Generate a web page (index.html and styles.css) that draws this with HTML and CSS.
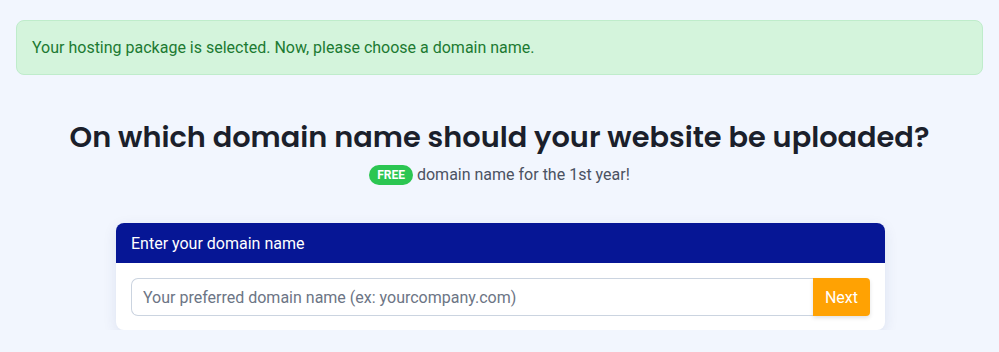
FILE: index.html
```html
<!DOCTYPE html>
<html lang="en">
<head>
<meta charset="utf-8">
<title>Choose domain</title>
<link rel="stylesheet" href="styles.css">
</head>
<body>
<div class="page">
  <div class="alert">Your hosting package is selected. Now, please choose a domain name.</div>
  <h1 class="title">On which domain name should your website be uploaded?</h1>
  <p class="subtitle"><span class="badge">FREE</span> domain name for the 1st year!</p>
  <div class="card">
    <div class="card-header">Enter your domain name</div>
    <div class="card-body">
      <form class="input-group">
        <input class="domain-input" type="text" placeholder="Your preferred domain name (ex: yourcompany.com)">
        <button class="next-btn" type="button">Next</button>
      </form>
    </div>
  </div>
</div>
</body>
</html>
```
FILE: styles.css
```css
* { box-sizing: border-box; }
html, body { margin: 0; padding: 0; }
body {
  background: #f2f6fe;
  font-family: Roboto, "Liberation Sans", Arial, sans-serif;
  color: #1f2430;
}
.page {
  padding: 20px 16px 0;
}
.alert {
  background: #d4f4dc;
  border: 1px solid #bfeccb;
  border-radius: 8px;
  color: #1c7a32;
  font-size: 16px;
  height: 55px;
  padding: 0 15px;
  display: flex;
  align-items: center;
}
.title {
  font-family: Poppins, "Open Sans", "DejaVu Sans", sans-serif;
  font-weight: 600;
  font-size: 28.8px;
  line-height: 40px;
  text-align: center;
  color: #1b1f2b;
  margin: 42px 0 0;
}
.subtitle {
  margin: 6px 0 0;
  text-align: center;
  font-size: 16px;
  line-height: 24px;
  color: #4b5262;
}
.badge {
  display: inline-block;
  background: #2cc652;
  color: #fff;
  font-weight: 700;
  font-size: 12px;
  line-height: 20px;
  height: 20px;
  padding: 0 8px;
  border-radius: 10px;
  vertical-align: 1px;
}
.card {
  width: 769px;
  margin: 36px auto 0;
  background: #fff;
  border-radius: 8px;
  box-shadow: 0 4px 14px rgba(40, 60, 120, 0.10);
  overflow: hidden;
  position: relative;
  left: 1px;
}
.card-header {
  background: #061695;
  color: #fff;
  font-size: 16px;
  height: 40px;
  padding: 0 15px;
  display: flex;
  align-items: center;
}
.card-body {
  padding: 15px 15px 14px;
}
.input-group {
  display: flex;
  margin: 0;
}
.domain-input {
  flex: 1;
  height: 38px;
  border: 1px solid #cbd4e0;
  border-right: none;
  border-radius: 7px 0 0 7px;
  padding: 0 11px;
  font-family: inherit;
  font-size: 16px;
  color: #333;
  background: #fff;
  outline: none;
}
.domain-input::placeholder { color: #6c7585; }
.next-btn {
  width: 57px;
  height: 38px;
  border: none;
  background: #ffa203;
  color: #fff;
  font-family: inherit;
  font-size: 16px;
  border-radius: 0 4px 4px 0;
  box-shadow: 0 2px 4px rgba(0,0,0,0.12);
  padding: 0;
}
```
